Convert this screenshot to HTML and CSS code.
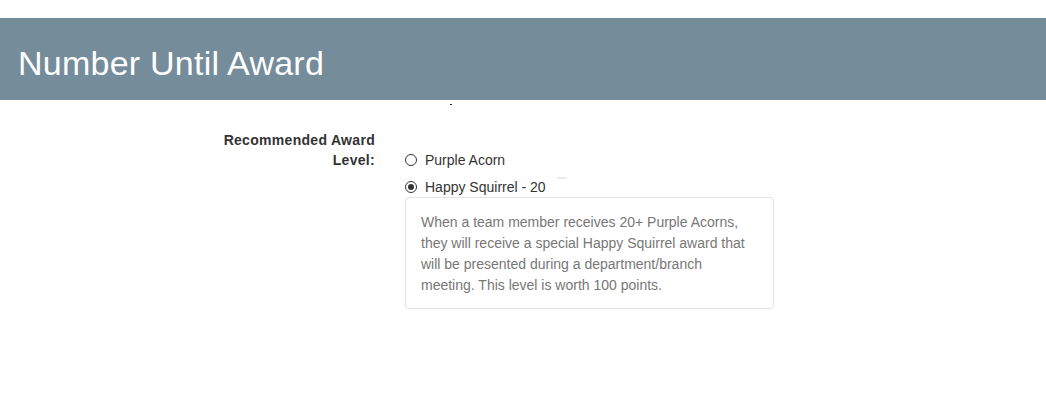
FILE: index.html
```html
<!DOCTYPE html>
<html>
<head>
<meta charset="utf-8">
<link rel="stylesheet" href="styles.css">
</head>
<body>
<div class="page">
  <header class="banner">
    <h1 class="title">Number Until Award</h1>
  </header>
  <div class="form-area">
    <span class="mark-dot"></span>
    <span class="mark-dash"></span>
    <div class="form-group">
      <div class="label">Recommended Award Level:</div>
      <div class="field">
        <div class="radio"><span class="radio-circle"></span><span class="radio-text">Purple Acorn</span></div>
        <div class="radio"><span class="radio-circle checked"></span><span class="radio-text">Happy Squirrel - 20</span></div>
        <div class="note">When a team member receives 20+ Purple Acorns, they will receive a special Happy Squirrel award that will be presented during a department/branch meeting. This level is worth 100 points.</div>
      </div>
    </div>
  </div>
</div>
</body>
</html>
```

FILE: styles.css
```css
html, body {
  margin: 0;
  padding: 0;
  background: #ffffff;
}

body {
  font-family: "Liberation Sans", Arial, Helvetica, sans-serif;
  font-size: 14px;
  line-height: 20px;
  color: #333333;
}

.page {
  padding-top: 18px;
}

.banner {
  background: #758c9b;
  height: 82px;
  box-sizing: border-box;
  padding: 26px 18px 0;
}

.title {
  margin: 0;
  font-weight: normal;
  font-size: 34px;
  line-height: 39px;
  letter-spacing: 0.24px;
  color: #ffffff;
}

.form-area {
  position: relative;
  padding-top: 30px;
}

.mark-dot {
  position: absolute;
  left: 450px;
  top: 4px;
  width: 2px;
  height: 1px;
  background: #222;
}

.mark-dash {
  position: absolute;
  left: 557px;
  top: 77px;
  width: 10px;
  height: 2px;
  background: #ececec;
}

.form-group {
  display: grid;
  grid-template-columns: 375px 369px;
  column-gap: 30px;
}

.label {
  text-align: right;
  font-weight: bold;
  padding-left: 215px;
  line-height: 20px;
  letter-spacing: 0.3px;
}

.field {
  padding-top: 13px;
}

.radio {
  display: flex;
  align-items: center;
  height: 27px;
  padding-top: 7px;
  box-sizing: border-box;
}

.radio-circle {
  width: 10px;
  height: 10px;
  border: 1px solid #333;
  border-radius: 50%;
  background: #fff;
  margin-right: 8px;
  display: flex;
  align-items: center;
  justify-content: center;
  flex-shrink: 0;
}

.radio-circle.checked::after {
  content: "";
  width: 6px;
  height: 6px;
  border-radius: 50%;
  background: #333;
}

.radio-text {
  line-height: 20px;
}

.note {
  border: 1px solid #e3e3e3;
  border-radius: 4px;
  padding: 14px 15px 12px;
  color: #777777;
  line-height: 21px;
}
```
